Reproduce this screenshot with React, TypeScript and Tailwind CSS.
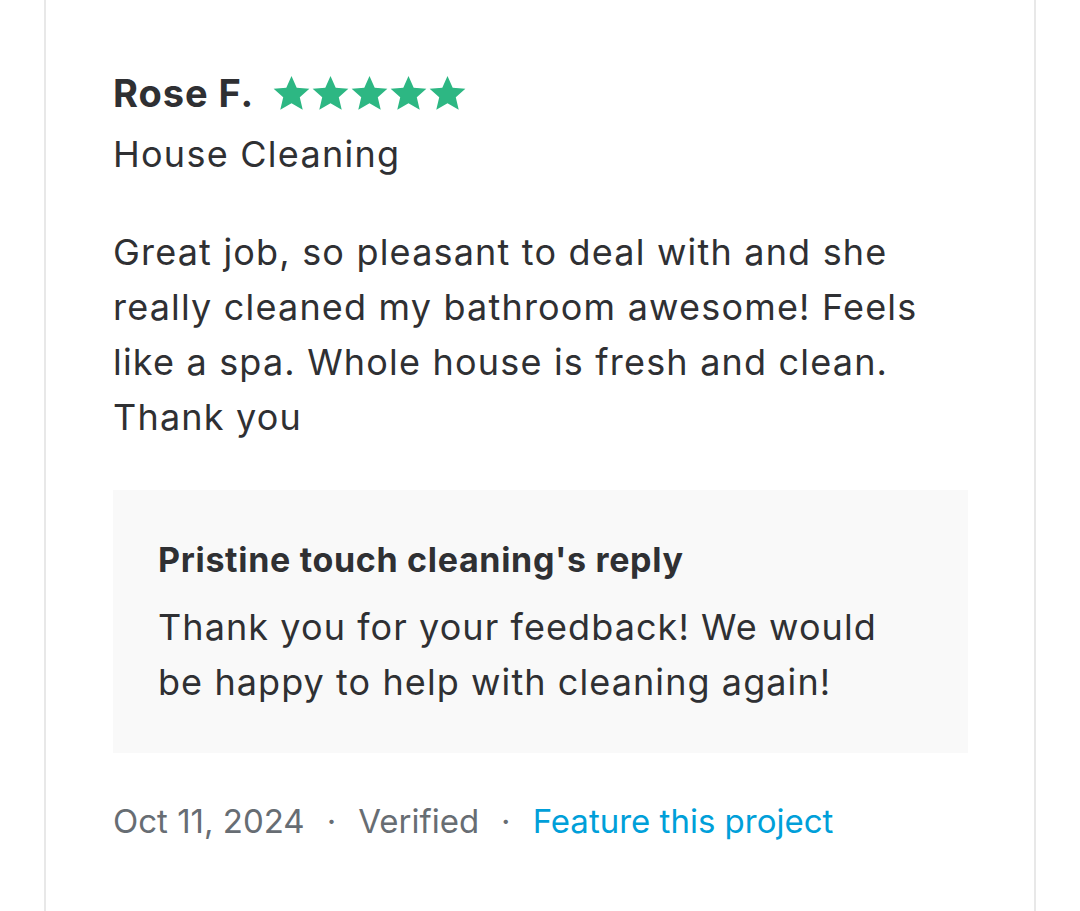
const StarIcon = () => (
  <svg viewBox="0 0 24 24" className="w-[39px] h-[39px]" fill="#2db783">
    <path d="M12 1.2l3.2 7.2 7.8.7-5.9 5.2 1.8 7.7L12 18l-6.9 4 1.8-7.7L1 9.1l7.8-.7z" />
  </svg>
);

const Dot = () => <span className="mx-[22px] text-[#676d73]">·</span>;

export default function App() {
  return (
    <div className="min-h-screen bg-white text-[#2f3033]" style={{ fontFamily: "Inter, 'Noto Sans', sans-serif" }}>
      <div className="ml-[44px] w-[992px] min-h-[911px] border-x-2 border-[#e8e8e8] pl-[67px] pr-[66px] pt-[69px]">
        <div className="flex items-center gap-[19px]">
          <h2 className="text-[38px] leading-[48px] font-bold tracking-[0.025em]">Rose F.</h2>
          <div className="flex -ml-[1px]">
            <StarIcon />
            <StarIcon />
            <StarIcon />
            <StarIcon />
            <StarIcon />
          </div>
        </div>
        <div className="text-[36px] leading-[48px] mt-[13px] tracking-[0.035em]">House Cleaning</div>
        <p className="text-[36px] leading-[55px] mt-[47px] tracking-[0.033em] pr-[40px]">
          Great job, so pleasant to deal with and she really cleaned my bathroom awesome! Feels like a spa. Whole
          house is fresh and clean. Thank you
        </p>
        <div className="mt-[45px] bg-[#f9f9f9] pl-[45px] pr-[60px] pt-[46px] pb-[43px]">
          <div className="text-[34px] leading-[48px] font-bold tracking-[0.02em]">Pristine touch cleaning's reply</div>
          <p className="text-[36px] leading-[55px] mt-[16px] tracking-[0.03em]">
            Thank you for your feedback! We would be happy to help with cleaning again!
          </p>
        </div>
        <div className="mt-[43px] flex items-center text-[33px] leading-[50px] text-[#676d73]">
          <span>Oct 11, 2024</span>
          <Dot />
          <span>Verified</span>
          <Dot />
          <a className="text-[#009fd9]">Feature this project</a>
        </div>
      </div>
    </div>
  );
}
